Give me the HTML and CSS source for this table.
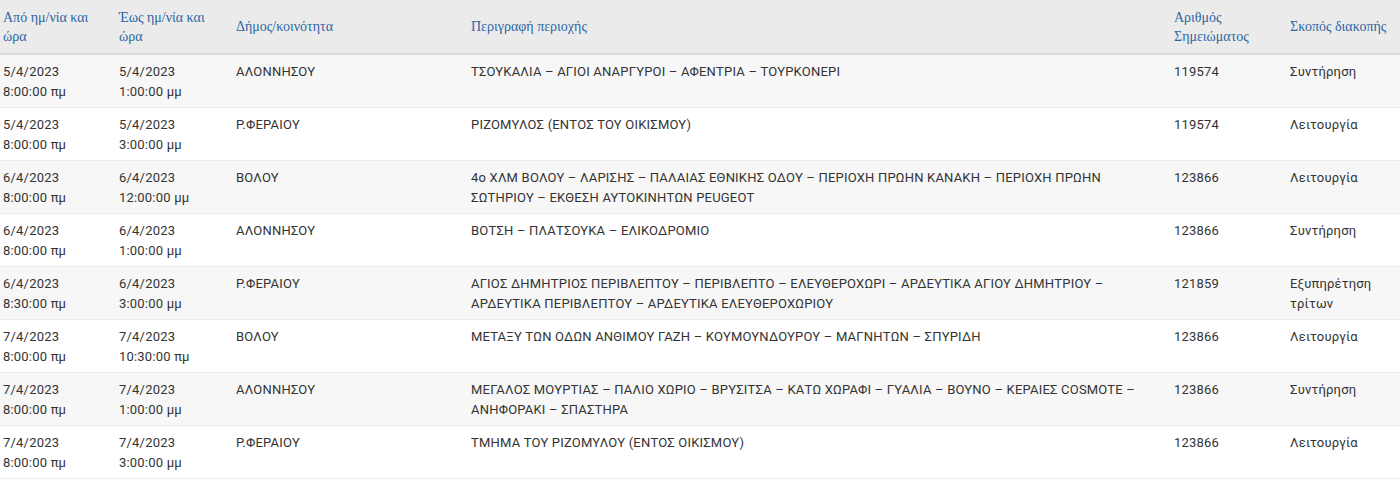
FILE: index.html
```html
<!DOCTYPE html>
<html lang="el">
<head>
    <meta charset="UTF-8">
    <meta name="viewport" content="width=device-width, initial-scale=1.0">
    <title>Προγραμματισμένες διακοπές</title>
    <link rel="stylesheet" href="styles.css">
</head>
<body>
    <table class="outages">
        <colgroup>
            <col class="c-from">
            <col class="c-to">
            <col class="c-town">
            <col class="c-area">
            <col class="c-note">
            <col class="c-reason">
        </colgroup>
        <thead>
            <tr>
                <th>Από ημ/νία και ώρα</th>
                <th>Έως ημ/νία και ώρα</th>
                <th>Δήμος/κοινότητα</th>
                <th>Περιγραφή περιοχής</th>
                <th>Αριθμός Σημειώματος</th>
                <th>Σκοπός διακοπής</th>
            </tr>
        </thead>
        <tbody>
            <tr>
                <td>5/4/2023<br>8:00:00 πμ</td>
                <td>5/4/2023<br>1:00:00 μμ</td>
                <td>ΑΛΟΝΝΗΣΟΥ</td>
                <td>ΤΣΟΥΚΑΛΙΑ – ΑΓΙΟΙ ΑΝΑΡΓΥΡΟΙ – ΑΦΕΝΤΡΙΑ – ΤΟΥΡΚΟΝΕΡΙ</td>
                <td>119574</td>
                <td>Συντήρηση</td>
            </tr>
            <tr>
                <td>5/4/2023<br>8:00:00 πμ</td>
                <td>5/4/2023<br>3:00:00 μμ</td>
                <td>Ρ.ΦΕΡΑΙΟΥ</td>
                <td>ΡΙΖΟΜΥΛΟΣ (ΕΝΤΟΣ ΤΟΥ ΟΙΚΙΣΜΟΥ)</td>
                <td>119574</td>
                <td>Λειτουργία</td>
            </tr>
            <tr>
                <td>6/4/2023<br>8:00:00 πμ</td>
                <td>6/4/2023<br>12:00:00 μμ</td>
                <td>ΒΟΛΟΥ</td>
                <td>4ο ΧΛΜ ΒΟΛΟΥ – ΛΑΡΙΣΗΣ – ΠΑΛΑΙΑΣ ΕΘΝΙΚΗΣ ΟΔΟΥ – ΠΕΡΙΟΧΗ ΠΡΩΗΝ ΚΑΝΑΚΗ – ΠΕΡΙΟΧΗ ΠΡΩΗΝ ΣΩΤΗΡΙΟΥ – ΕΚΘΕΣΗ ΑΥΤΟΚΙΝΗΤΩΝ PEUGEOT</td>
                <td>123866</td>
                <td>Λειτουργία</td>
            </tr>
            <tr>
                <td>6/4/2023<br>8:00:00 πμ</td>
                <td>6/4/2023<br>1:00:00 μμ</td>
                <td>ΑΛΟΝΝΗΣΟΥ</td>
                <td>ΒΟΤΣΗ – ΠΛΑΤΣΟΥΚΑ – ΕΛΙΚΟΔΡΟΜΙΟ</td>
                <td>123866</td>
                <td>Συντήρηση</td>
            </tr>
            <tr>
                <td>6/4/2023<br>8:30:00 πμ</td>
                <td>6/4/2023<br>3:00:00 μμ</td>
                <td>Ρ.ΦΕΡΑΙΟΥ</td>
                <td>ΑΓΙΟΣ ΔΗΜΗΤΡΙΟΣ ΠΕΡΙΒΛΕΠΤΟΥ – ΠΕΡΙΒΛΕΠΤΟ – ΕΛΕΥΘΕΡΟΧΩΡΙ – ΑΡΔΕΥΤΙΚΑ ΑΓΙΟΥ ΔΗΜΗΤΡΙΟΥ – ΑΡΔΕΥΤΙΚΑ ΠΕΡΙΒΛΕΠΤΟΥ – ΑΡΔΕΥΤΙΚΑ ΕΛΕΥΘΕΡΟΧΩΡΙΟΥ</td>
                <td>121859</td>
                <td>Εξυπηρέτηση τρίτων</td>
            </tr>
            <tr>
                <td>7/4/2023<br>8:00:00 πμ</td>
                <td>7/4/2023<br>10:30:00 πμ</td>
                <td>ΒΟΛΟΥ</td>
                <td>ΜΕΤΑΞΥ ΤΩΝ ΟΔΩΝ ΑΝΘΙΜΟΥ ΓΑΖΗ – ΚΟΥΜΟΥΝΔΟΥΡΟΥ – ΜΑΓΝΗΤΩΝ – ΣΠΥΡΙΔΗ</td>
                <td>123866</td>
                <td>Λειτουργία</td>
            </tr>
            <tr>
                <td>7/4/2023<br>8:00:00 πμ</td>
                <td>7/4/2023<br>1:00:00 μμ</td>
                <td>ΑΛΟΝΝΗΣΟΥ</td>
                <td>ΜΕΓΑΛΟΣ ΜΟΥΡΤΙΑΣ – ΠΑΛΙΟ ΧΩΡΙΟ – ΒΡΥΣΙΤΣΑ – ΚΑΤΩ ΧΩΡΑΦΙ – ΓΥΑΛΙΑ – ΒΟΥΝΟ – ΚΕΡΑΙΕΣ COSMOTE – ΑΝΗΦΟΡΑΚΙ – ΣΠΑΣΤΗΡΑ</td>
                <td>123866</td>
                <td>Συντήρηση</td>
            </tr>
            <tr>
                <td>7/4/2023<br>8:00:00 πμ</td>
                <td>7/4/2023<br>3:00:00 μμ</td>
                <td>Ρ.ΦΕΡΑΙΟΥ</td>
                <td>ΤΜΗΜΑ ΤΟΥ ΡΙΖΟΜΥΛΟΥ (ΕΝΤΟΣ ΟΙΚΙΣΜΟΥ)</td>
                <td>123866</td>
                <td>Λειτουργία</td>
            </tr>
        </tbody>
    </table>
</body>
</html>
```

FILE: styles.css
```css
* {
    margin: 0;
    padding: 0;
    box-sizing: border-box;
}

body {
    background: #fff;
    font-family: Roboto, 'Noto Sans', sans-serif;
    color: #333;
}

.outages {
    width: 1400px;
    border-collapse: collapse;
    table-layout: fixed;
}

.c-from { width: 116px; }
.c-to { width: 117px; }
.c-town { width: 235px; }
.c-area { width: 703px; }
.c-note { width: 116px; }
.c-reason { width: 113px; }

.outages th {
    height: 54px;
    padding: 0 20px 0 3px;
    background: #ebebeb;
    border-bottom: 2px solid #dcdcdc;
    font-family: 'Liberation Serif', 'DejaVu Serif', serif;
    font-size: 14px;
    font-weight: normal;
    line-height: 19px;
    text-align: left;
    color: #2b66a3;
}

.outages th:last-child {
    padding-right: 2px;
}

.outages td {
    height: 53px;
    padding: 7px 24px 5px 3px;
    border-bottom: 1px solid #ececec;
    font-size: 13px;
    line-height: 20px;
    letter-spacing: 0.2px;
    vertical-align: top;
}

.outages tbody tr:nth-child(odd) td {
    background: #f7f7f7;
}

.outages tbody tr:nth-child(even) td {
    background: #fff;
}
```
